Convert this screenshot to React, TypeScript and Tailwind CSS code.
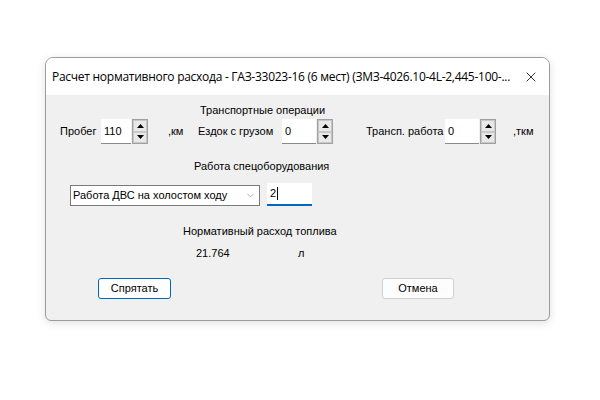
import { ChevronDown, X } from 'lucide-react';

function Spinner() {
  return (
    <div className="ml-px flex h-[25px] w-4 flex-col border border-[#a0a0a0] bg-[#f0f0f0]">
      <div className="flex flex-1 items-center justify-center border border-[#c8c8c8] bg-[#e8e8e8]">
        <svg width="7" height="4" viewBox="0 0 7 4">
          <path d="M0 4 L3.5 0 L7 4 Z" fill="#000" />
        </svg>
      </div>
      <div className="flex flex-1 items-center justify-center border border-[#c8c8c8] bg-[#e8e8e8]">
        <svg width="7" height="4" viewBox="0 0 7 4">
          <path d="M0 0 L3.5 4 L7 0 Z" fill="#000" />
        </svg>
      </div>
    </div>
  );
}

function NumField({ value, width }: { value: string; width: string }) {
  return (
    <div className={`flex h-[25px] items-center border-b border-[#8a8a8a] bg-white pl-[3px] ${width}`}>
      {value}
    </div>
  );
}

export default function App() {
  return (
    <div className="h-[400px] w-[600px] bg-white pl-[45px] pt-[57px] font-['Liberation_Sans',Arial,sans-serif] text-[11px] text-black">
      <div className="flex h-[264px] w-[505px] flex-col overflow-hidden rounded-t-[8px] rounded-b-[6px] border border-[#9c9c9c] bg-[#f0f0f0] shadow-[0_2px_8px_rgba(0,0,0,0.12)]">
        {/* Title bar */}
        <div className="flex h-[37px] shrink-0 items-center bg-white pl-[6px] pr-[10px] font-['Open_Sans',sans-serif] text-[12px]">
          <span className="flex-1 whitespace-nowrap tracking-[-0.27px]">
            Расчет нормативного расхода - ГАЗ-33023-16 (6 мест) (ЗМЗ-4026.10-4L-2,445-100-...
          </span>
          <X size={16} strokeWidth={1.2} className="ml-[8px] shrink-0" />
        </div>

        {/* Body */}
        <div className="flex flex-col pt-[8px]">
          <div className="ml-[154px] h-[14px] leading-[14px]">Транспортные операции</div>

          <div className="mt-[2px] flex items-center">
            <span className="ml-[14px] w-[41px]">Пробег</span>
            <NumField value="110" width="w-[30px]" />
            <Spinner />
            <span className="ml-[20px] w-[30px]">,км</span>
            <span className="w-[84px]">Ездок с грузом</span>
            <NumField value="0" width="w-[34px]" />
            <Spinner />
            <span className="ml-[33px] w-[79px]">Трансп. работа</span>
            <NumField value="0" width="w-[34px]" />
            <Spinner />
            <span className="ml-[17px]">,ткм</span>
          </div>

          <div className="ml-[148px] mt-[15px] h-[14px] leading-[14px]">Работа спецоборудования</div>

          <div className="mt-[10px] flex items-end">
            <div className="ml-[24px] flex h-[21px] w-[190px] items-center border border-[#7a7a7a] bg-white pl-[2px] pr-[3px]">
              <span className="flex-1">Работа ДВС на холостом ходу</span>
              <ChevronDown size={11} strokeWidth={1.2} className="text-[#6a6a6a]" />
            </div>
            <div className="ml-[7px] flex h-[23px] w-[45px] items-center border-b-2 border-[#0067c0] bg-white pl-[3px]">
              <span>2</span>
              <span className="ml-px h-[13px] w-px bg-black" />
            </div>
          </div>

          <div className="ml-[137px] mt-[18px] h-[14px] leading-[14px]">Нормативный расход топлива</div>

          <div className="mt-[8px] flex h-[14px] leading-[14px]">
            <span className="ml-[150px] w-[102px]">21.764</span>
            <span>л</span>
          </div>

          <div className="mt-[18px] flex">
            <button className="ml-[52px] h-[21px] w-[73px] rounded-[3px] border border-[#0067c0] bg-white">
              Спрятать
            </button>
            <button className="ml-[211px] h-[21px] w-[72px] rounded-[3px] border border-[#d0d0d0] bg-[#fdfdfd]">
              Отмена
            </button>
          </div>
        </div>
      </div>
    </div>
  );
}
